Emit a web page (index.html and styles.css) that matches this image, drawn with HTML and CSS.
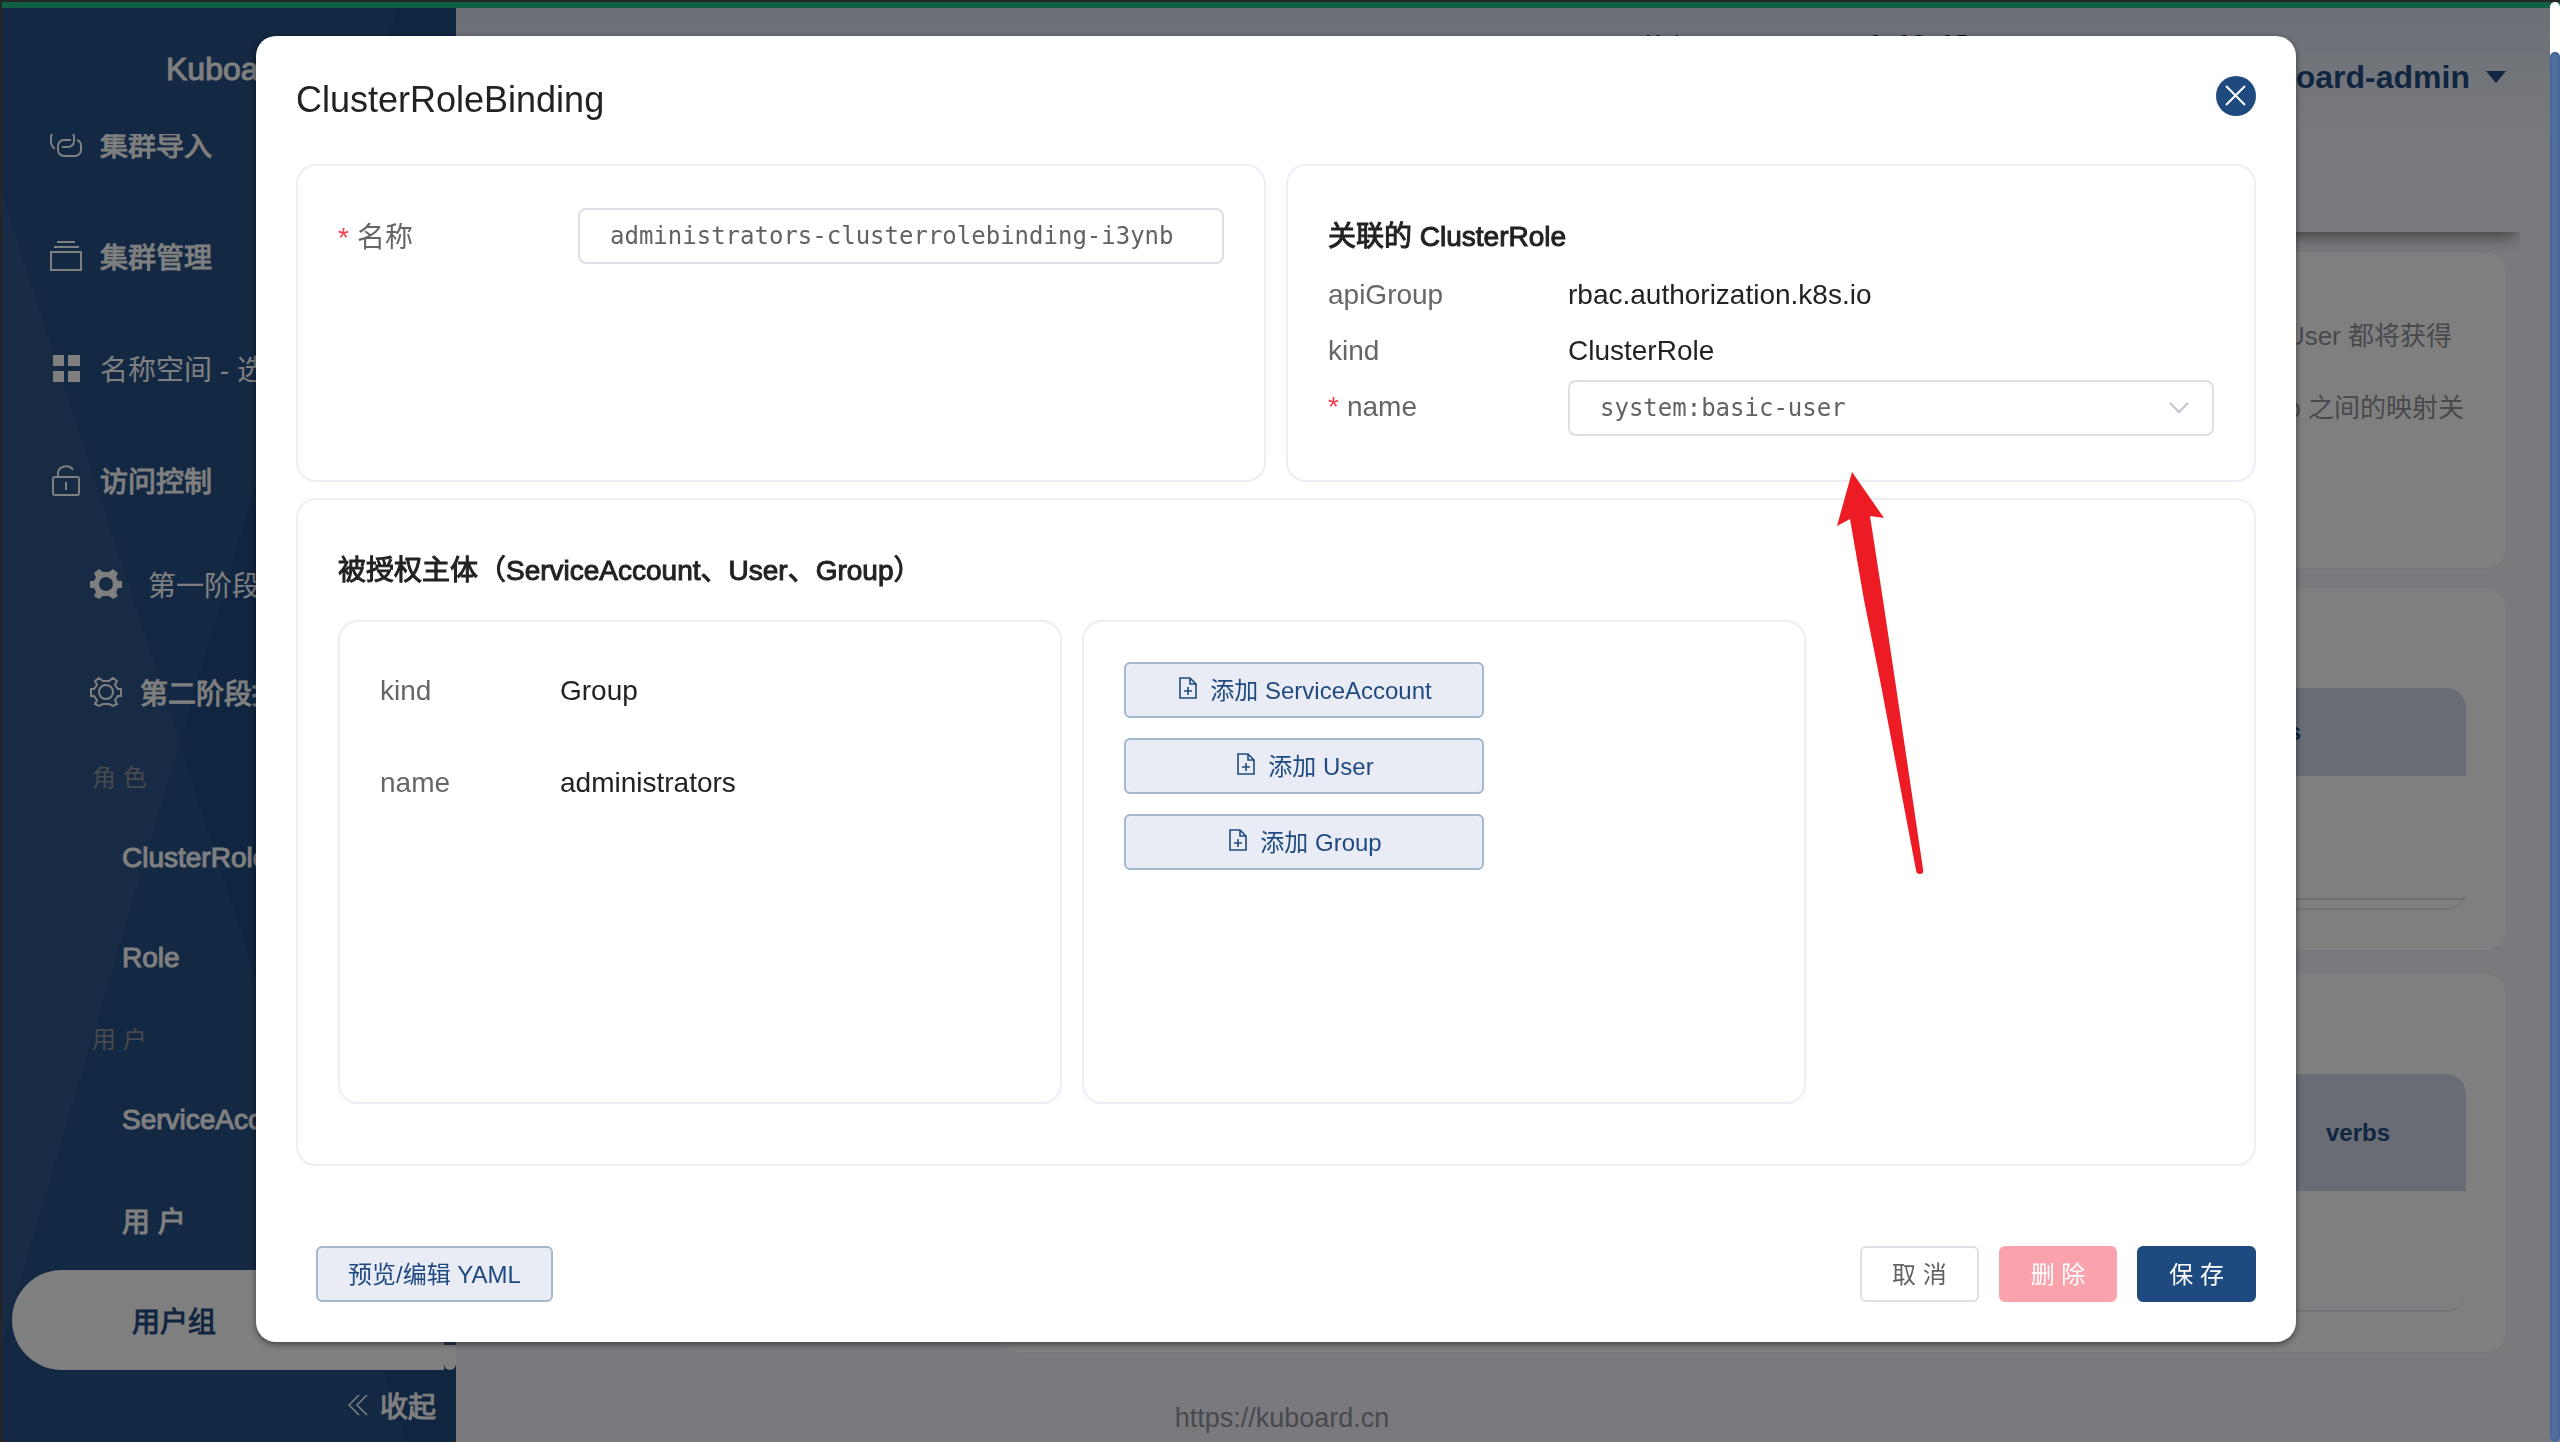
FILE: index.html
```html
<!DOCTYPE html>
<html lang="zh-CN">
<head>
<meta charset="utf-8">
<meta name="viewport" content="width=device-width, initial-scale=1">
<title>Kuboard</title>
<link rel="stylesheet" href="styles.css">
</head>
<body>
<div class="app">
  <aside class="sidebar">
    <div class="brand">Kuboard</div>
    <nav class="menu">
      <ul class="menu-list">
        <li><a class="item strong" href="#"><svg class="icon" viewBox="0 0 32 32"><g fill="none" stroke="currentColor" stroke-width="2"><path d="M5 21C2 19 1 16 1 13V9a6 6 0 0 1 6-6h11a6 6 0 0 1 6 6v4a6 6 0 0 1-6 6h-6"/><path d="M21 12h-7a6 6 0 0 0-6 6v4a6 6 0 0 0 6 6h11a6 6 0 0 0 6-6v-4c0-3-1-5-4-6"/></g></svg>集群导入</a></li>
        <li><a class="item strong" href="#"><svg class="icon" viewBox="0 0 32 32"><g fill="none" stroke="currentColor" stroke-width="2"><path d="M1 12h30v18H1zM4 7h25M7 2h18"/></g></svg>集群管理</a></li>
        <li><a class="item" href="#"><svg class="icon" viewBox="0 0 32 32"><path fill="currentColor" d="M3 3h11v11H3zM18 3h12v11H18zM3 19h11v11H3zM18 19h12v11H18z"/></svg>名称空间 - 选择</a></li>
        <li><a class="item strong" href="#"><svg class="icon" viewBox="0 0 32 32"><g fill="none" stroke="currentColor" stroke-width="2"><rect x="3" y="13" width="26" height="18" rx="2"/><path d="M8 13V9a8 7 0 0 1 15-3M16 18v8"/></g></svg>访问控制</a></li>
      </ul>
      <ul class="submenu">
        <li><a class="subitem wide" href="#"><svg class="icon" viewBox="0 0 32 32"><path fill="currentColor" fill-rule="evenodd" d="M0 13h4l2-4-2-4 5-4 4 3h6l4-3 5 4-2 4 2 4h4v7h-4l-2 4 2 4-5 3-4-3h-6l-4 3-5-3 2-4-2-4H0zM16 9a7 7 0 1 0 0 14a7 7 0 0 0 0-14z"/></svg>第一阶段授权</a></li>
        <li><a class="subitem strong" href="#"><svg class="icon" viewBox="0 0 32 32"><g fill="none" stroke="currentColor" stroke-width="2"><path d="M1 13h3l3-4-2-4 4-3 4 3h6l4-3 4 3-2 4 3 4h3v7h-3l-3 4 2 4-4 2-4-2h-6l-4 2-4-2 2-4-3-4H1z"/><circle cx="16" cy="16" r="7"/></g></svg>第二阶段授权</a></li>
      </ul>
      <h3 class="group">角 色</h3>
      <ul>
        <li><a class="leaf strong" href="#">ClusterRole</a></li>
        <li><a class="leaf strong" href="#">Role</a></li>
      </ul>
      <h3 class="group">用 户</h3>
      <ul>
        <li><a class="leaf strong" href="#">ServiceAccount</a></li>
        <li><a class="leaf strong" href="#">用 户</a></li>
        <li><a class="leaf strong active" href="#">用户组</a></li>
      </ul>
      <span class="menu-scroll"></span>
    </nav>
    <button class="collapse strong" type="button"><svg class="chevrons" viewBox="0 0 20 22"><path fill="none" stroke="currentColor" stroke-width="1.5" d="M11 1L1 11l10 10M19 1L9 11l10 10"/></svg>收起</button>
  </aside>

  <main class="main">
    <header class="topbar">
      <div class="version"><span>Kubernetes</span><code>v1.18.15</code></div>
      <button class="user" type="button">kuboard-admin<svg class="caret" viewBox="0 0 20 12"><path fill="currentColor" d="M0 0h20L10 12z"/></svg></button>
    </header>
    <div class="cards">
      <section class="card intro">
        <p>User 都将获得</p>
        <p class="second">Group 之间的映射关</p>
      </section>
      <section class="card">
        <table class="grid short">
          <thead><tr><th></th><th>verbs</th></tr></thead>
          <tbody><tr><td></td><td></td></tr></tbody>
        </table>
      </section>
      <section class="card last">
        <table class="grid tall">
          <thead><tr><th></th><th>verbs</th></tr></thead>
          <tbody><tr><td></td><td></td></tr></tbody>
        </table>
      </section>
    </div>
    <footer class="site"><a href="#">https://kuboard.cn</a></footer>
  </main>
</div>

<div class="overlay">
  <form class="modal" role="dialog" aria-labelledby="dialog-title">
    <header class="modal-head">
      <h1 id="dialog-title">ClusterRoleBinding</h1>
      <button class="close" type="button" aria-label="关闭"><svg viewBox="0 0 40 40"><path fill="none" stroke="currentColor" stroke-width="2" d="M10 10l19 19M29 10L10 29"/></svg></button>
    </header>

    <div class="columns">
      <section class="panel">
        <div class="row">
          <label class="label required" for="binding-name">名称</label>
          <input class="field" id="binding-name" type="text" value="administrators-clusterrolebinding-i3ynb">
        </div>
      </section>
      <section class="panel">
        <h2>关联的 ClusterRole</h2>
        <div class="row"><span class="label">apiGroup</span><span class="value">rbac.authorization.k8s.io</span></div>
        <div class="row"><span class="label">kind</span><span class="value">ClusterRole</span></div>
        <div class="row">
          <label class="label required" for="role-name">name</label>
          <div class="select">
            <select class="field" id="role-name"><option>system:basic-user</option></select>
            <svg class="arrow-down" viewBox="0 0 20 12"><path fill="none" stroke="currentColor" stroke-width="2" d="M1 1l9 9 9-9"/></svg>
          </div>
        </div>
      </section>
    </div>

    <section class="panel subjects">
      <h2>被授权主体（ServiceAccount、User、Group）</h2>
      <div class="subject-list">
        <div class="box">
          <div class="row"><span class="label">kind</span><span class="value">Group</span></div>
          <div class="row"><span class="label">name</span><span class="value">administrators</span></div>
        </div>
        <div class="box actions">
          <button class="btn plain" type="button"><svg class="doc" viewBox="0 0 24 24"><path fill="none" stroke="currentColor" stroke-width="1.6" d="M4 2h10l6 6v14H4zM14 2v6h6M8 15h8M12 11v8"/></svg>添加 ServiceAccount</button>
          <button class="btn plain" type="button"><svg class="doc" viewBox="0 0 24 24"><path fill="none" stroke="currentColor" stroke-width="1.6" d="M4 2h10l6 6v14H4zM14 2v6h6M8 15h8M12 11v8"/></svg>添加 User</button>
          <button class="btn plain" type="button"><svg class="doc" viewBox="0 0 24 24"><path fill="none" stroke="currentColor" stroke-width="1.6" d="M4 2h10l6 6v14H4zM14 2v6h6M8 15h8M12 11v8"/></svg>添加 Group</button>
        </div>
      </div>
    </section>

    <footer class="modal-foot">
      <button class="btn plain yaml" type="button">预览/编辑 YAML</button>
      <button class="btn" type="button">取 消</button>
      <button class="btn danger" type="button">删 除</button>
      <button class="btn primary" type="submit">保 存</button>
    </footer>
    <svg class="pointer" viewBox="0 0 88 404" aria-hidden="true"><path fill="#ed1c24" d="M16 0l32 46-14-2 13 84 12 80L87 397q1 5-3 5t-4-4L44 208 28 128 14 47 1 54z"/></svg>
  </form>
</div>
<div class="page-scroll" aria-hidden="true"><span></span></div>
</body>
</html>
```
FILE: styles.css
```css
* { box-sizing: border-box; }

body {
  margin: 0;
  height: 100vh;
  overflow: hidden;
  background: #4c4c4c;
  color: #222;
  font-family: "Liberation Sans", "Noto Sans CJK SC", sans-serif;
  font-size: 28px;
}

h1, h2, h3, p, ul { margin: 0; padding: 0; }
ul { list-style: none; }
a { color: inherit; text-decoration: none; }
button, input, select { font: inherit; color: inherit; margin: 0; }
svg { display: block; flex: none; }
.strong { -webkit-text-stroke: 1px; }

.app {
  display: flex;
  height: calc(100vh - 2px);
  margin: 2px 0 0 2px;
  border-top: 6px solid #20c090;
}

/* Sidebar */
.sidebar {
  position: relative;
  display: flex;
  flex-direction: column;
  flex: none;
  width: 454px;
  background: #1f4a80;
  border-radius: 0 0 6px 6px;
  overflow: hidden;
  color: #fff;
}
.sidebar::before,
.sidebar::after {
  content: "";
  position: absolute;
  inset: 0;
  background: rgba(255, 255, 255, 0.04);
}
.sidebar::before { clip-path: polygon(0 13%, 89% 100%, 0 100%); }
.sidebar::after { clip-path: polygon(0 0, 87% 0, 0 93%); }
.sidebar > * { position: relative; z-index: 1; }

.brand {
  flex: none;
  height: 126px;
  padding: 41px 0 0 164px;
  font-size: 32px;
  line-height: 40px;
  -webkit-text-stroke: 1px;
}
.menu { flex: 1; overflow: hidden; }
.menu-list { margin-top: -46px; }
.item, .subitem, .leaf { display: flex; align-items: center; white-space: nowrap; }
.icon { width: 32px; height: 32px; }
.item {
  height: 112px;
  padding-left: 48px;
  gap: 18px;
}
.submenu { margin-top: -6px; }
.subitem { height: 108px; padding-left: 88px; gap: 18px; }
.subitem.wide { gap: 26px; }
.group {
  height: 62px;
  padding-left: 90px;
  color: #909399;
  font-size: 24px;
  font-weight: 400;
  line-height: 64px;
}
.leaf { height: 100px; padding-left: 120px; }
.leaf.active {
  margin: 0 12px 0 10px;
  border-radius: 50px 0 0 50px;
  background: #fff;
  color: #1f4a80;
}
.menu-scroll {
  position: absolute;
  right: 0;
  bottom: 0;
  width: 12px;
  height: 100%;
  border-radius: 6px;
  background: linear-gradient(#52709c 0 98%, #fff 98%);
}
.collapse {
  display: flex;
  flex: none;
  align-items: center;
  justify-content: flex-end;
  gap: 12px;
  height: 72px;
  padding: 0 20px 2px 0;
  border: 0;
  background: none;
}
.chevrons { width: 20px; height: 22px; }

/* Page behind the dialog */
.main {
  display: flex;
  flex-direction: column;
  flex: 1;
  min-width: 0;
  background: linear-gradient(#d6e0ee, #f4f5fc 140px);
}
.topbar {
  display: flex;
  flex: none;
  align-items: flex-start;
  justify-content: space-between;
  height: 224px;
  margin-right: 40px;
  padding: 20px 14px 0 1189px;
  background: linear-gradient(#d6e0ee, #f4f5fc 140px);
  box-shadow: 0 8px 16px -4px rgba(0, 0, 0, 0.5);
  clip-path: inset(0 0 -24px 0);
}
.version { display: flex; gap: 86px; font-size: 24px; line-height: 32px; }
.version code { font: 24px/34px "DejaVu Sans Mono", monospace; }
.user {
  display: flex;
  align-items: center;
  gap: 16px;
  margin-top: 26px;
  padding: 0;
  border: 0;
  background: none;
  color: #1f4a80;
  font-size: 32px;
  font-weight: 700;
  line-height: 46px;
}
.caret { width: 20px; height: 12px; }
.cards {
  display: flex;
  flex-direction: column;
  gap: 20px;
  padding: 20px 54px 0 544px;
}
.card {
  height: 362px;
  padding: 100px 40px 0 40px;
  border-radius: 20px;
  background: #fff;
  box-shadow: 0 0 2px #dcdfe6;
}
.card.intro {
  height: 316px;
  padding: 48px 54px 0 40px;
  color: #909399;
  font-size: 26px;
  line-height: 72px;
  text-align: right;
}
.intro .second { margin-right: -12px; }
.card.last { height: 378px; margin-top: 4px; }
.grid {
  width: 100%;
  border-collapse: separate;
  border-spacing: 0;
  border-bottom: 2px solid #e4e7f0;
  border-radius: 20px;
}
.grid th {
  height: 88px;
  padding: 0;
  background: #d3d9ea;
  color: #1f4a80;
  font-size: 24px;
}
.grid th:first-child { width: auto; border-radius: 20px 0 0 0; }
.grid th:last-child {
  width: 180px;
  padding-right: 36px;
  border-radius: 0 20px 0 0;
  text-align: center;
}
.grid td { padding: 0; height: 119px; }
.short th:last-child { width: 358px; }
.short tbody td { border-bottom: 2px solid #dcdfe6; height: 124px; }
.short { padding-bottom: 8px; }
.tall th { height: 117px; }
.site {
  margin-top: auto;
  padding: 0 452px 6px 0;
  color: #909399;
  font-size: 27px;
  line-height: 36px;
  text-align: center;
}

.page-scroll {
  position: fixed;
  top: 2px;
  right: 0;
  bottom: 0;
  z-index: 3;
  width: 10px;
  padding-top: 50px;
  border-radius: 6px;
  background: #fff;
}
.page-scroll span {
  display: block;
  height: 100%;
  border-radius: 6px;
  background: #52709c;
  box-shadow: inset 0 0 4px #31599b;
}

/* Dialog */
.overlay {
  position: fixed;
  inset: 0;
  z-index: 2;
  padding: 36px 264px 0 256px;
  background: rgba(0, 0, 0, 0.5);
}
.modal {
  position: relative;
  padding: 40px;
  border-radius: 20px;
  background: #fff;
  box-shadow: 0 2px 6px rgba(0, 0, 0, 0.5);
}
.modal-head {
  display: flex;
  justify-content: space-between;
  height: 88px;
}
h1 { font-size: 36px; font-weight: 400; line-height: 48px; }
.close {
  width: 40px;
  height: 40px;
  padding: 0;
  border: 0;
  border-radius: 50%;
  background: #1f4a80;
  color: #fff;
}
.columns { display: grid; grid-template-columns: 1fr 1fr; gap: 20px; }
.panel {
  padding: 42px 40px 44px;
  border: 2px solid #ebeef5;
  border-radius: 20px;
}
h2 {
  margin-bottom: 2px;
  font-size: 28px;
  font-weight: 400;
  line-height: 58px;
  -webkit-text-stroke: 1px;
}
.row { display: flex; align-items: center; height: 56px; }
.label { flex: none; width: 240px; color: #666; }
.columns .label, .columns .value { padding-bottom: 3px; }
.required::before {
  content: "*";
  margin-right: 8px;
  color: #f84054;
}
.field {
  width: 100%;
  height: 56px;
  padding: 0 30px;
  border: 2px solid #dcdfe6;
  border-radius: 8px;
  background: #fff;
  color: #606266;
  font: 24px "DejaVu Sans Mono", monospace;
  appearance: none;
}
.select { position: relative; flex: 1; }
.arrow-down {
  position: absolute;
  top: 22px;
  right: 25px;
  width: 20px;
  height: 12px;
  color: #c0c4cc;
}
.subjects { margin-top: 16px; padding-bottom: 60px; }
.subjects h2 { margin-bottom: 20px; }
.subject-list { display: flex; gap: 20px; }
.box {
  flex: 0 1 724px;
  min-height: 484px;
  padding: 40px;
  border: 2px solid #ebeef5;
  border-radius: 20px;
}
.box .label { width: 180px; }
.box .row { padding-top: 2px; }
.box .row + .row { margin-top: 36px; }
.actions { display: flex; flex-direction: column; gap: 20px; }
.btn {
  display: flex;
  align-items: center;
  justify-content: center;
  gap: 10px;
  height: 56px;
  padding: 0 30px 4px;
  border: 2px solid #dcdfe6;
  border-radius: 6px;
  background: #fff;
  color: #606266;
  font-size: 24px;
}
.actions .btn { width: 360px; }
.btn.plain { border-color: #a5b7cc; background: #e9ecf4; color: #1f4a80; }
.btn.danger { border-color: #fba3ad; background: #fba3ad; color: #fff; }
.btn.primary { border-color: #1f4a80; background: #1f4a80; color: #fff; }
.doc { width: 24px; height: 24px; }
.modal-foot {
  display: flex;
  gap: 20px;
  padding: 80px 0 0 20px;
}
.yaml { margin-right: auto; }
.pointer {
  position: absolute;
  top: 436px;
  left: 1580px;
  width: 88px;
  height: 404px;
}
```
